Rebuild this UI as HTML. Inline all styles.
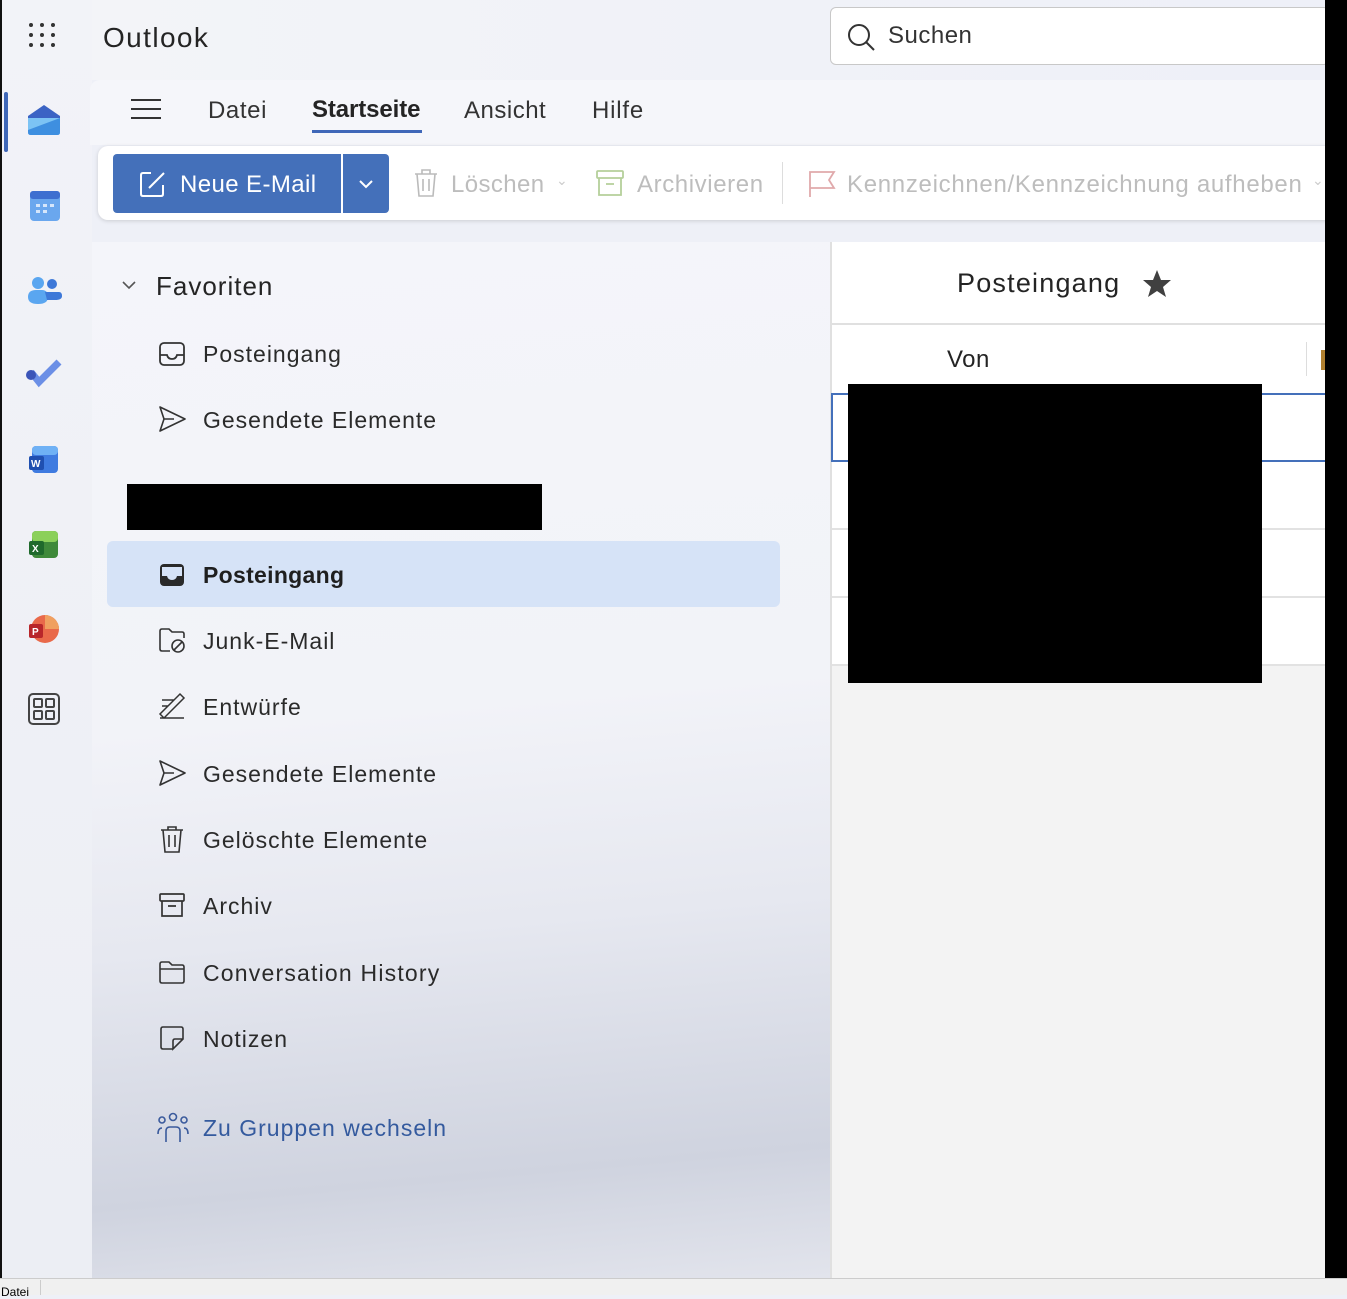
<!DOCTYPE html>
<html><head><meta charset="utf-8"><style>
*{box-sizing:border-box;margin:0;padding:0}
body{width:1347px;height:1295px;overflow:hidden;font-family:"Liberation Sans","DejaVu Sans",sans-serif;background:#eef0f7;position:relative;color:#242424}
.abs{position:absolute}
.rail{left:0;top:0;width:92px;height:1278px;background:linear-gradient(#f2f3f8,#eceef4);border-left:2px solid #111}
.top{left:92px;top:0;width:1233px;height:80px;background:linear-gradient(90deg,#f3f4f8,#eef0f8)}
.txt{white-space:nowrap}
.pane{left:92px;top:242px;width:738px;height:1036px;background:linear-gradient(175deg,#f4f5fa 0%,#f2f3f8 45%,#e6e8f0 65%,#cfd3df 88%,#e2e4ec 100%)}
.item{position:absolute;left:203px;font-size:23px;color:#2a2a2a;letter-spacing:1px}
.ico{position:absolute;left:158px;width:28px;height:28px}
</style></head><body>
<div class="abs rail"></div>
<div class="abs" style="left:4px;top:92px;width:4px;height:60px;background:#3f67b8;border-radius:2px"></div>
<svg class="abs" style="left:28px;top:22px" width="30" height="28"><g fill="#333"><circle cx="3" cy="3" r="2"/><circle cx="14" cy="3" r="2"/><circle cx="25" cy="3" r="2"/><circle cx="3" cy="13" r="2"/><circle cx="14" cy="13" r="2"/><circle cx="25" cy="13" r="2"/><circle cx="3" cy="23" r="2"/><circle cx="14" cy="23" r="2"/><circle cx="25" cy="23" r="2"/></g></svg>
<div class="abs top"></div>
<div class="abs txt" style="left:103px;top:22px;font-size:28px;color:#242424;letter-spacing:1.4px">Outlook</div>
<div class="abs" style="left:830px;top:7px;width:500px;height:58px;background:#fff;border:1px solid #c8c8c8;border-radius:6px"></div>
<svg class="abs" style="left:846px;top:22px" width="30" height="30"><circle cx="13" cy="13" r="10" fill="none" stroke="#333" stroke-width="2"/><line x1="20" y1="20" x2="28" y2="28" stroke="#333" stroke-width="2"/></svg>
<div class="abs txt" style="left:888px;top:22px;font-size:24px;color:#333;letter-spacing:0.5px">Suchen</div>
<svg class="abs" style="left:26px;top:102px" width="36" height="34"><path d="M2 14 L18 3 L34 14 L34 30 Q34 33 31 33 L5 33 Q2 33 2 30Z" fill="#3b63c4"/><path d="M2 16 L34 16 L34 30 Q34 33 31 33 L5 33 Q2 33 2 30Z" fill="#7cc3f4"/><path d="M2 28 L34 16 L34 30 Q34 33 31 33 L5 33 Q2 33 2 30Z" fill="#3e8fe0"/></svg>
<svg class="abs" style="left:29px;top:190px" width="32" height="32"><rect x="1" y="1" width="30" height="30" rx="4" fill="#6aa7ee"/><rect x="1" y="1" width="30" height="8" rx="3" fill="#3d6fd0"/><g fill="#d5e6fb"><rect x="7" y="14" width="4" height="3"/><rect x="14" y="14" width="4" height="3"/><rect x="21" y="14" width="4" height="3"/><rect x="7" y="20" width="4" height="3"/><rect x="14" y="20" width="4" height="3"/></g></svg>
<svg class="abs" style="left:27px;top:275px" width="36" height="32"><circle cx="11" cy="8" r="6" fill="#5aa6f0"/><circle cx="25" cy="9" r="5" fill="#3d78d8"/><path d="M1 22 Q1 15 9 15 L15 15 Q21 15 21 22 Q21 29 11 29 Q1 29 1 22Z" fill="#5aa6f0"/><path d="M18 17 L32 17 Q35 17 35 21 Q35 25 28 25 L20 25Z" fill="#3d78d8"/></svg>
<svg class="abs" style="left:25px;top:358px" width="40" height="32"><path d="M6 14 L14 24 L34 4" stroke="#6b8fe6" stroke-width="7" fill="none"/><circle cx="6" cy="17" r="5" fill="#3b55b8"/></svg>
<svg class="abs" style="left:28px;top:444px" width="32" height="32"><rect x="4" y="2" width="26" height="27" rx="4" fill="#3f7be0"/><rect x="4" y="2" width="26" height="9" rx="4" fill="#6fb1f5"/><rect x="1" y="12" width="15" height="14" rx="2" fill="#1f4fb0"/><text x="3" y="23" font-size="10" fill="#fff" font-weight="bold">W</text></svg>
<svg class="abs" style="left:28px;top:529px" width="32" height="32"><rect x="4" y="2" width="26" height="27" rx="4" fill="#3f8a3a"/><rect x="4" y="2" width="26" height="11" rx="4" fill="#8bd05a"/><rect x="1" y="12" width="15" height="14" rx="2" fill="#1f6a2c"/><text x="4" y="23" font-size="10" fill="#fff" font-weight="bold">X</text></svg>
<svg class="abs" style="left:28px;top:613px" width="32" height="32"><circle cx="17" cy="16" r="14" fill="#e9694a"/><path d="M17 2 A14 14 0 0 1 31 16 L17 16Z" fill="#f0a060"/><rect x="1" y="11" width="14" height="14" rx="2" fill="#b8262a"/><text x="4" y="22" font-size="10" fill="#fff" font-weight="bold">P</text></svg>
<svg class="abs" style="left:27px;top:692px" width="34" height="34"><rect x="2" y="2" width="30" height="30" rx="4" fill="none" stroke="#444" stroke-width="2"/><g fill="none" stroke="#444" stroke-width="2"><rect x="7" y="7" width="8" height="8" rx="1"/><rect x="19" y="7" width="8" height="8" rx="1"/><rect x="7" y="19" width="8" height="8" rx="1"/><rect x="19" y="19" width="8" height="8" rx="1"/></g></svg>
<div class="abs" style="left:90px;top:80px;width:1235px;height:65px;background:#f5f6fa;border-radius:10px 0 0 0"></div>
<div class="abs" style="left:131px;top:99px;width:30px;height:2px;background:#333"></div>
<div class="abs" style="left:131px;top:108px;width:30px;height:2px;background:#333"></div>
<div class="abs" style="left:131px;top:117px;width:30px;height:2px;background:#333"></div>
<div class="abs txt" style="left:208px;top:97px;font-size:24px;color:#333;letter-spacing:0.6px">Datei</div>
<div class="abs txt" style="left:312px;top:96px;font-size:24px;color:#242424;font-weight:bold;letter-spacing:-0.1px">Startseite</div>
<div class="abs" style="left:312px;top:130px;width:110px;height:3px;background:#3f67b8"></div>
<div class="abs txt" style="left:464px;top:97px;font-size:24px;color:#333;letter-spacing:0.5px">Ansicht</div>
<div class="abs txt" style="left:592px;top:97px;font-size:24px;color:#333;letter-spacing:0.8px">Hilfe</div>
<div class="abs" style="left:98px;top:146px;width:1230px;height:74px;background:#fff;border-radius:10px 0 0 10px;box-shadow:0 1px 4px rgba(0,0,0,.15)"></div>
<div class="abs" style="left:113px;top:154px;width:228px;height:59px;background:#4470ba;border-radius:4px 0 0 4px"></div>
<div class="abs" style="left:343px;top:154px;width:46px;height:59px;background:#4470ba;border-radius:0 4px 4px 0"></div>
<svg class="abs" style="left:139px;top:170px" width="28" height="28"><path d="M12 3 L4 3 Q2 3 2 5 L2 24 Q2 26 4 26 L22 26 Q24 26 24 24 L24 15" fill="none" stroke="#fff" stroke-width="2"/><path d="M10 18 L25 3" stroke="#fff" stroke-width="2"/></svg>
<div class="abs txt" style="left:180px;top:171px;font-size:24px;color:#fff;letter-spacing:0.4px">Neue E-Mail</div>
<svg class="abs" style="left:358px;top:179px" width="16" height="10"><path d="M2 2 L8 8 L14 2" fill="none" stroke="#fff" stroke-width="2"/></svg>
<svg class="abs" style="left:411px;top:168px" width="30" height="30"><path d="M4 6 L26 6 M11 6 L11 2 L19 2 L19 6 M6 6 L8 28 L22 28 L24 6 M12 11 L12 23 M18 11 L18 23" fill="none" stroke="#bbb" stroke-width="1.6"/></svg>
<div class="abs txt" style="left:451px;top:171px;font-size:24px;color:#bdbdbd;letter-spacing:0.4px">Löschen</div>
<div class="abs txt" style="left:556px;top:172px;font-size:14px;color:#ccc">⌄</div>
<svg class="abs" style="left:595px;top:169px" width="30" height="28"><rect x="2" y="2" width="26" height="7" rx="1" fill="none" stroke="#b5cf9a" stroke-width="1.8"/><path d="M4 9 L4 26 L26 26 L26 9 M11 15 L19 15" fill="none" stroke="#b5cf9a" stroke-width="1.8"/></svg>
<div class="abs txt" style="left:637px;top:171px;font-size:24px;color:#bdbdbd;letter-spacing:0.6px">Archivieren</div>
<div class="abs" style="left:782px;top:162px;width:1px;height:42px;background:#ddd"></div>
<svg class="abs" style="left:807px;top:169px" width="30" height="30"><path d="M3 28 L3 3 L27 3 L22 11 L27 19 L3 19" fill="none" stroke="#e0a9ab" stroke-width="1.8"/></svg>
<div class="abs txt" style="left:847px;top:171px;font-size:24px;color:#bdbdbd;letter-spacing:0.7px">Kennzeichnen/Kennzeichnung aufheben</div>
<div class="abs txt" style="left:1312px;top:172px;font-size:14px;color:#ccc">⌄</div>
<div class="abs pane"></div>
<svg class="abs" style="left:121px;top:279px" width="16" height="12"><path d="M2 3 L8 9 L14 3" fill="none" stroke="#555" stroke-width="1.6"/></svg>
<div class="abs txt" style="left:156px;top:271px;font-size:26px;color:#242424;letter-spacing:1px">Favoriten</div>
<svg class="ico" style="top:340px" viewBox="0 0 28 28"><rect x="2" y="3" width="24" height="22" rx="4" fill="none" stroke="#333" stroke-width="1.8"/><path d="M2 15 L9 15 Q10 19 14 19 Q18 19 19 15 L26 15" fill="none" stroke="#333" stroke-width="1.8"/></svg>
<div class="item txt" style="top:341px">Posteingang</div>
<svg class="ico" style="top:405px" viewBox="0 0 28 28"><path d="M2 2 L27 14 L2 26 L6 14Z M6 14 L16 14" fill="none" stroke="#333" stroke-width="1.6" stroke-linejoin="round"/></svg>
<div class="item txt" style="top:407px">Gesendete Elemente</div>
<div class="abs" style="left:127px;top:484px;width:415px;height:46px;background:#000"></div>
<div class="abs" style="left:107px;top:541px;width:673px;height:66px;background:#d6e3f7;border-radius:6px"></div>
<svg class="ico" style="top:561px" viewBox="0 0 28 28"><rect x="2" y="3" width="24" height="22" rx="4" fill="#2a2a2a"/><path d="M4 15 L9 15 Q10 19 14 19 Q18 19 19 15 L24 15 L24 6 L4 6Z" fill="#d6e3f7"/></svg>
<div class="item txt" style="top:562px;font-weight:bold;color:#1f1f1f;letter-spacing:0.3px">Posteingang</div>
<svg class="ico" style="top:626px" viewBox="0 0 28 28"><path d="M12 25 L4 25 Q2 25 2 23 L2 5 Q2 3 4 3 L11 3 L14 6 L24 6 Q26 6 26 8 L26 12" fill="none" stroke="#333" stroke-width="1.6"/><circle cx="20" cy="20" r="6" fill="none" stroke="#333" stroke-width="1.6"/><path d="M16 24 L24 16" stroke="#333" stroke-width="1.6"/></svg>
<div class="item txt" style="top:628px">Junk-E-Mail</div>
<svg class="ico" style="top:692px" viewBox="0 0 28 28"><path d="M2 22 L6 26 L26 6 L22 2Z M4 8 L16 8 M4 14 L10 14 M2 26 L26 26" fill="none" stroke="#333" stroke-width="1.5"/></svg>
<div class="item txt" style="top:694px">Entwürfe</div>
<svg class="ico" style="top:759px" viewBox="0 0 28 28"><path d="M2 2 L27 14 L2 26 L6 14Z M6 14 L16 14" fill="none" stroke="#333" stroke-width="1.6" stroke-linejoin="round"/></svg>
<div class="item txt" style="top:761px">Gesendete Elemente</div>
<svg class="ico" style="top:825px" viewBox="0 0 28 28"><path d="M3 5 L25 5 M10 5 L10 2 L18 2 L18 5 M5 5 L7 27 L21 27 L23 5 M11 10 L11 22 M17 10 L17 22" fill="none" stroke="#333" stroke-width="1.6"/></svg>
<div class="item txt" style="top:827px">Gelöschte Elemente</div>
<svg class="ico" style="top:891px" viewBox="0 0 28 28"><rect x="2" y="3" width="24" height="7" rx="1" fill="none" stroke="#333" stroke-width="1.7"/><path d="M4 10 L4 25 L24 25 L24 10 M10 15 L18 15" fill="none" stroke="#333" stroke-width="1.7"/></svg>
<div class="item txt" style="top:893px">Archiv</div>
<svg class="ico" style="top:958px" viewBox="0 0 28 28"><path d="M2 6 Q2 4 4 4 L11 4 L14 7 L24 7 Q26 7 26 9 L26 23 Q26 25 24 25 L4 25 Q2 25 2 23Z M2 11 L26 11" fill="none" stroke="#333" stroke-width="1.6"/></svg>
<div class="item txt" style="top:960px;letter-spacing:1.2px">Conversation History</div>
<svg class="ico" style="top:1024px" viewBox="0 0 28 28"><path d="M15 25 L5 25 Q3 25 3 23 L3 5 Q3 3 5 3 L23 3 Q25 3 25 5 L25 15 L15 25 L15 17 Q15 15 17 15 L25 15" fill="none" stroke="#333" stroke-width="1.6"/></svg>
<div class="item txt" style="top:1026px">Notizen</div>
<svg class="ico" style="top:1112px;left:156px;width:34px;height:32px" viewBox="0 0 34 32"><g fill="none" stroke="#3a5a9c" stroke-width="1.6"><circle cx="17" cy="5" r="3.5"/><circle cx="6" cy="8" r="3"/><circle cx="28" cy="8" r="3"/><path d="M10 30 L10 19 Q10 15 14 15 L20 15 Q24 15 24 19 L24 30"/><path d="M2 22 Q2 16 6 16 M32 22 Q32 16 28 16"/></g></svg>
<div class="abs txt" style="left:203px;top:1115px;font-size:23px;color:#345a9e;letter-spacing:1px">Zu Gruppen wechseln</div>
<div class="abs" style="left:830px;top:242px;width:495px;height:1036px;background:#f3f3f3;border-left:2px solid #e0e0e0"></div>
<div class="abs" style="left:832px;top:242px;width:493px;height:424px;background:#fff"></div>
<div class="abs" style="left:832px;top:323px;width:493px;height:2px;background:#e0e0e0"></div>
<div class="abs txt" style="left:957px;top:268px;font-size:27px;color:#242424;letter-spacing:1.2px">Posteingang</div>
<svg class="abs" style="left:1142px;top:269px" width="30" height="30"><path d="M15 1 L19 11 L29 11 L21 18 L24 28 L15 22 L6 28 L9 18 L1 11 L11 11Z" fill="#404040"/></svg>
<div class="abs txt" style="left:947px;top:346px;font-size:24px;color:#242424;letter-spacing:0.5px">Von</div>
<div class="abs" style="left:1306px;top:342px;width:1px;height:34px;background:#ddd"></div>
<div class="abs" style="left:1321px;top:350px;width:4px;height:20px;background:#b08030"></div>
<div class="abs" style="left:831px;top:393px;width:494px;height:69px;border:2px solid #4470ba;border-right:none"></div>
<div class="abs" style="left:832px;top:528px;width:493px;height:2px;background:#e2e2e2"></div>
<div class="abs" style="left:832px;top:596px;width:493px;height:2px;background:#e2e2e2"></div>
<div class="abs" style="left:832px;top:664px;width:493px;height:2px;background:#e2e2e2"></div>
<div class="abs" style="left:848px;top:384px;width:414px;height:299px;background:#000"></div>
<div class="abs" style="left:1325px;top:0;width:22px;height:1278px;background:#000"></div>
<div class="abs" style="left:0;top:1278px;width:1347px;height:17px;background:#f0f0f0;border-top:1px solid #ccc"></div>
<div class="abs txt" style="left:1px;top:1285px;font-size:12px;color:#000">Datei</div>
<div class="abs" style="left:40px;top:1280px;width:1px;height:15px;background:#ccc"></div>
</body></html>
